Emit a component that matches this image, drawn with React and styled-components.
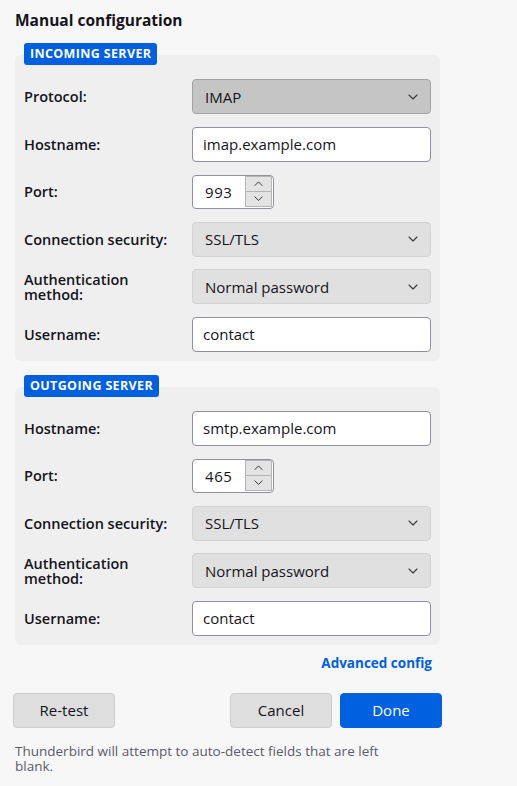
import React from "react";
import styled, { createGlobalStyle } from "styled-components";

const GlobalStyle = createGlobalStyle`
  body {
    margin: 0;
    background: #f7f7f7;
    font-family: "Open Sans", "Noto Sans", sans-serif;
    color: #15141a;
  }
`;

const incoming = [
  { label: "Protocol:", type: "select", value: "IMAP", active: true },
  { label: "Hostname:", type: "text", value: "imap.example.com" },
  { label: "Port:", type: "port", value: "993" },
  { label: "Connection security:", type: "select", value: "SSL/TLS" },
  { label: "Authentication method:", type: "select", value: "Normal password" },
  { label: "Username:", type: "text", value: "contact" },
];

const outgoing = [
  { label: "Hostname:", type: "text", value: "smtp.example.com" },
  { label: "Port:", type: "port", value: "465" },
  { label: "Connection security:", type: "select", value: "SSL/TLS" },
  { label: "Authentication method:", type: "select", value: "Normal password" },
  { label: "Username:", type: "text", value: "contact" },
];

function Chevron({ up, size = 10 }) {
  return (
    <svg width={size} height={size * 0.6} viewBox="0 0 10 6" fill="none">
      <polyline
        points={up ? "1,5 5,1 9,5" : "1,1 5,5 9,1"}
        stroke="#3a3a3a"
        strokeWidth="1.1"
        strokeLinecap="round"
        strokeLinejoin="round"
      />
    </svg>
  );
}

function Control({ field }) {
  if (field.type === "select") {
    return (
      <Select $active={field.active}>
        <span>{field.value}</span>
        <Chevron />
      </Select>
    );
  }
  if (field.type === "port") {
    return (
      <PortBox>
        <span>{field.value}</span>
        <Spinner>
          <SpinButton>
            <Chevron up size={9} />
          </SpinButton>
          <SpinButton>
            <Chevron size={9} />
          </SpinButton>
        </Spinner>
      </PortBox>
    );
  }
  return <TextInput>{field.value}</TextInput>;
}

function ServerSection({ title, fields }) {
  return (
    <Section>
      <Legend>{title}</Legend>
      <Box>
        {fields.map((f) => (
          <React.Fragment key={f.label}>
            <Label>{f.label}</Label>
            <Control field={f} />
          </React.Fragment>
        ))}
      </Box>
    </Section>
  );
}

export default function App() {
  return (
    <Page>
      <GlobalStyle />
      <Title>Manual configuration</Title>
      <ServerSection title="Incoming server" fields={incoming} />
      <ServerSection title="Outgoing server" fields={outgoing} />
      <LinkRow>
        <Link href="#">Advanced config</Link>
      </LinkRow>
      <Actions>
        <Button>Re-test</Button>
        <Spacer />
        <Button>Cancel</Button>
        <Button $primary>Done</Button>
      </Actions>
      <Note>Thunderbird will attempt to auto-detect fields that are left blank.</Note>
    </Page>
  );
}

const Page = styled.div`
  width: 427px;
  padding: 9px 0 0 15px;
  box-sizing: content-box;
`;

const Title = styled.h1`
  margin: 0 0 12px;
  font-size: 15.5px;
  font-weight: 700;
  line-height: 22px;
`;

const Section = styled.section`
  display: flex;
  flex-direction: column;
  align-items: flex-start;
  width: 425px;
  margin-bottom: 14px;
`;

const Legend = styled.div`
  position: relative;
  z-index: 1;
  margin: 0 0 -10px 9px;
  height: 22px;
  padding: 0 6px;
  border-radius: 3px;
  background: #0060df;
  color: #fff;
  font-size: 12.5px;
  font-weight: 700;
  line-height: 22px;
  text-transform: uppercase;
  letter-spacing: 0.35px;
`;

const Box = styled.div`
  align-self: stretch;
  display: grid;
  grid-template-columns: 168px 239px;
  grid-auto-rows: 35px;
  row-gap: 12.5px;
  align-items: center;
  padding: 24px 9px 9px;
  background: #efefef;
  border-radius: 6px;
`;

const Label = styled.div`
  font-size: 14.5px;
  font-weight: 600;
  line-height: 15px;
  padding-right: 20px;
`;

const controlBase = `
  box-sizing: border-box;
  height: 35px;
  border-radius: 4px;
  font-size: 15px;
  display: flex;
  align-items: center;
`;

const Select = styled.div`
  ${controlBase}
  justify-content: space-between;
  padding: 0 12px;
  background: ${(p) => (p.$active ? "#c5c5c5" : "#e0e0e0")};
  border: 1px solid ${(p) => (p.$active ? "#a3a3a3" : "#d3d3d3")};
`;

const TextInput = styled.div`
  ${controlBase}
  padding: 0 10px;
  background: #fff;
  border: 1px solid #8f8f9d;
`;

const PortBox = styled.div`
  ${controlBase}
  width: 82px;
  height: 34px;
  padding: 0 1px 0 12px;
  background: #fff;
  border: 1px solid #8f8f9d;
  justify-content: space-between;
  letter-spacing: 0.6px;
`;

const Spinner = styled.div`
  display: flex;
  flex-direction: column;
  width: 27px;
  height: 31px;
  border: 1px solid #b5b5b5;
  box-sizing: border-box;
`;

const SpinButton = styled.div`
  flex: 1;
  display: flex;
  align-items: center;
  justify-content: center;
  background: #e3e3e3;
  & + & {
    border-top: 1px solid #b5b5b5;
  }
`;

const LinkRow = styled.div`
  width: 417px;
  display: flex;
  justify-content: flex-end;
  margin-top: -5px;
  line-height: 18px;
`;

const Link = styled.a`
  color: #0060df;
  font-size: 13.5px;
  font-weight: 700;
  text-decoration: none;
`;

const Actions = styled.div`
  display: flex;
  gap: 8px;
  margin: 21px 0 0 -2px;
  width: 429px;
`;

const Spacer = styled.div`
  flex: 1;
`;

const Button = styled.button`
  width: 102px;
  height: 35px;
  border-radius: 4px;
  font-family: inherit;
  font-size: 15px;
  color: ${(p) => (p.$primary ? "#fff" : "#15141a")};
  background: ${(p) => (p.$primary ? "#0061e0" : "#dedede")};
  border: 1px solid ${(p) => (p.$primary ? "#0061e0" : "#cdcdcd")};
  cursor: pointer;
`;

const Note = styled.p`
  margin: 16px 0 0;
  width: 400px;
  font-size: 13.5px;
  line-height: 15px;
  color: #5b5b66;
`;
